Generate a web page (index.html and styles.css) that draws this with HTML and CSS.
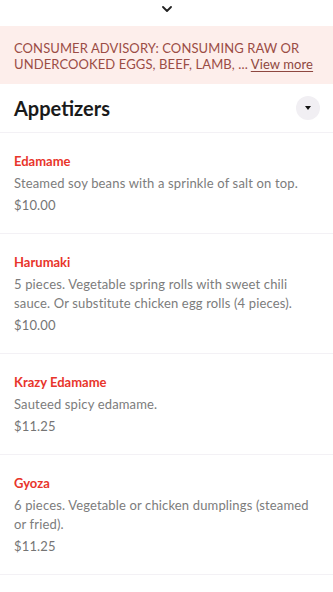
FILE: index.html
```html
<!DOCTYPE html>
<html lang="en">
<head>
    <meta charset="UTF-8">
    <meta name="viewport" content="width=device-width, initial-scale=1.0">
    <title>Menu</title>
    <link rel="stylesheet" href="styles.css">
</head>
<body>
    <div class="handle">
        <svg width="10" height="6" viewBox="0 0 10 6"><path d="M1 1l4 4 4-4" fill="none" stroke="#222" stroke-width="1.8" stroke-linecap="round" stroke-linejoin="round"/></svg>
    </div>

    <div class="advisory">
        CONSUMER ADVISORY: CONSUMING RAW OR UNDERCOOKED EGGS, BEEF, LAMB, ... <a href="#" class="view-more">View more</a>
    </div>

    <div class="section-head">
        <h2>Appetizers</h2>
        <button type="button" class="toggle">
            <svg width="8" height="6" viewBox="0 0 8 6"><path d="M1 1h6L4 5z" fill="#111"/></svg>
        </button>
    </div>

    <div class="item">
        <div class="item-name">Edamame</div>
        <div class="item-desc">Steamed soy beans with a sprinkle of salt on top.</div>
        <div class="item-price">$10.00</div>
    </div>
    <div class="item">
        <div class="item-name">Harumaki</div>
        <div class="item-desc">5 pieces. Vegetable spring rolls with sweet chili sauce. Or substitute chicken egg rolls (4 pieces).</div>
        <div class="item-price">$10.00</div>
    </div>
    <div class="item">
        <div class="item-name">Krazy Edamame</div>
        <div class="item-desc">Sauteed spicy edamame.</div>
        <div class="item-price">$11.25</div>
    </div>
    <div class="item">
        <div class="item-name">Gyoza</div>
        <div class="item-desc">6 pieces. Vegetable or chicken dumplings (steamed or fried).</div>
        <div class="item-price">$11.25</div>
    </div>
</body>
</html>
```

FILE: styles.css
```css
body {
    margin: 0;
    padding: 0;
    font-family: Lato, "Open Sans", Arial, sans-serif;
    background-color: #fff;
    color: #222;
}

.handle {
    height: 26px;
    display: flex;
    align-items: center;
    justify-content: center;
    padding-bottom: 8px;
    box-sizing: border-box;
}

.advisory {
    background-color: #fdeeeb;
    color: #9b4c45;
    font-size: 13px;
    letter-spacing: 0.1px;
    line-height: 16px;
    padding: 14px 14px 12px;
}

.view-more {
    color: #8e4740;
    text-decoration: underline;
    text-underline-offset: 2px;
}

.section-head {
    height: 48px;
    display: flex;
    align-items: center;
    justify-content: space-between;
    padding: 0 13px 0 14px;
    border-bottom: 1px solid #f3f1f5;
}

.section-head h2 {
    margin: 0;
    font-size: 20px;
    font-weight: 700;
    color: #1a1a1a;
}

.toggle {
    width: 24px;
    height: 24px;
    border-radius: 50%;
    border: none;
    background-color: #f1eff3;
    display: flex;
    align-items: center;
    justify-content: center;
    padding: 0;
}

.item {
    padding: 18px 14px;
    border-bottom: 1px solid #f3f1f5;
}

.item-name {
    color: #e8352b;
    font-size: 13px;
    font-weight: 700;
    line-height: 20px;
    margin-bottom: 2px;
}

.item-desc {
    color: #7c7c7c;
    font-size: 13px;
    letter-spacing: 0.15px;
    line-height: 19px;
    padding-top: 1px;
}

.item-price {
    color: #757575;
    font-size: 13px;
    letter-spacing: 0.15px;
    line-height: 20px;
    margin-top: 2px;
}
```
